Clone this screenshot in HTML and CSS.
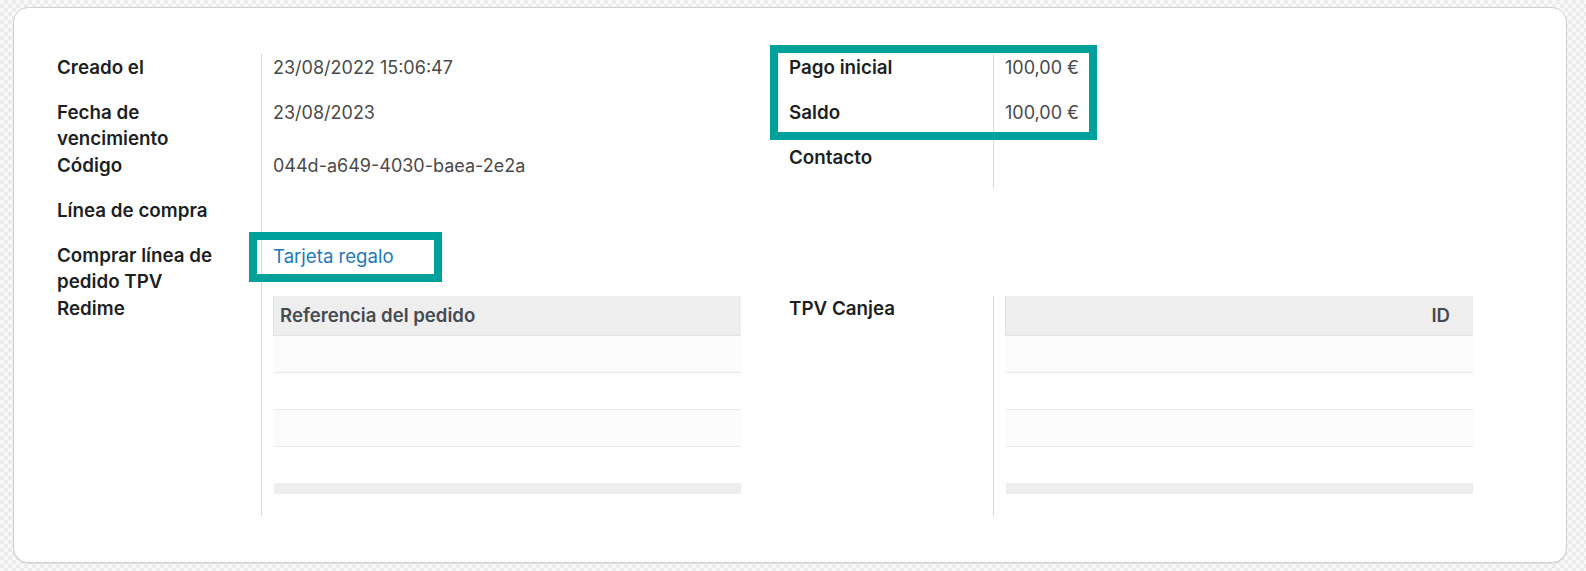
FILE: index.html
```html
<!DOCTYPE html>
<html lang="es">
<head>
<meta charset="utf-8">
<title>Tarjeta regalo</title>
<link rel="stylesheet" href="styles.css">
</head>
<body>
<div class="sheet">
  <div class="group">
    <div class="col">
      <div class="row"><div class="lbl">Creado el</div><div class="val">23/08/2022 15:06:47</div></div>
      <div class="row"><div class="lbl">Fecha de vencimiento</div><div class="val">23/08/2023</div></div>
      <div class="row"><div class="lbl">Código</div><div class="val">044d-a649-4030-baea-2e2a</div></div>
      <div class="row"><div class="lbl">Línea de compra</div><div class="val"></div></div>
      <div class="row"><div class="lbl">Comprar línea de pedido TPV</div><div class="val"><a class="link" href="#">Tarjeta regalo</a></div></div>
    </div>
    <div class="col">
      <div class="row"><div class="lbl">Pago inicial</div><div class="val">100,00 €</div></div>
      <div class="row"><div class="lbl">Saldo</div><div class="val">100,00 €</div></div>
      <div class="row"><div class="lbl">Contacto</div><div class="val"></div></div>
    </div>
  </div>
  <div class="group">
    <div class="col">
      <div class="row row-table"><div class="lbl">Redime</div>
        <div class="val val-table">
          <table class="list">
            <thead><tr><th>Referencia del pedido</th></tr></thead>
            <tbody><tr><td></td></tr><tr><td></td></tr><tr><td></td></tr><tr><td></td></tr></tbody>
            <tfoot><tr><td></td></tr></tfoot>
          </table>
        </div>
      </div>
    </div>
    <div class="col">
      <div class="row row-table"><div class="lbl">TPV Canjea</div>
        <div class="val val-table">
          <table class="list">
            <thead><tr><th class="num">ID</th></tr></thead>
            <tbody><tr><td></td></tr><tr><td></td></tr><tr><td></td></tr><tr><td></td></tr></tbody>
            <tfoot><tr><td></td></tr></tfoot>
          </table>
        </div>
      </div>
    </div>
  </div>
  <div class="mark mark-amounts"></div>
  <div class="mark mark-link"></div>
</div>
</body>
</html>
```
FILE: styles.css
```css
html, body { height: 100%; }
body {
  margin: 0;
  box-sizing: border-box;
  padding: 7px 19px 8px 13px;
  background-color: #f6f6f6;
  background-image: repeating-conic-gradient(#ececec 0 25%, #f9f9f9 0 50%);
  background-size: 8px 8px;
  font-family: "Inter", "Noto Sans", sans-serif;
  color: #212529;
}
.sheet {
  position: relative;
  box-sizing: border-box;
  height: 556px;
  background: #fff;
  border: 1px solid #cfd0d6;
  border-radius: 15px;
  box-shadow: 0 1px 1px rgba(0,0,0,0.08);
  padding: 46px 0 0 43px;
}
.group {
  display: grid;
  grid-template-columns: 684px 684px;
  column-gap: 48px;
  align-items: start;
}
.row {
  display: grid;
  grid-template-columns: 204px 1fr;
  min-height: 44.8px;
}
.lbl {
  padding: 1px 16px 0 0;
  font-weight: 600;
  font-size: 18.8px;
  line-height: 26.3px;
  color: #1d1f23;
}
.val {
  border-left: 1px solid #d9d9d9;
  padding: 1px 0 0 11px;
  font-size: 18px;
  line-height: 26.3px;
  color: #4a4a4a;
}
.link {
  color: #1f78b8;
  text-decoration: none;
  font-size: 18.6px;
}
.row-table .lbl { padding-top: 0; }
.val-table { padding: 0 0 22px 11px; }
.list {
  width: 468px;
  border-collapse: collapse;
}
.list th {
  height: 40px;
  box-sizing: border-box;
  padding: 0 6px;
  background: #eeeeee;
  border-left: 1px solid #e2e2e2;
  border-bottom: 1px solid #e0e4e8;
  text-align: left;
  font-weight: 600;
  font-size: 18.6px;
  color: #454b52;
}
.list th.num { text-align: right; padding-right: 23px; }
.list tbody td {
  height: 36px;
  padding: 0;
  border-bottom: 1px solid #e9e9e9;
}
.list tbody tr:nth-child(odd) td { background: #fbfbfb; }
.list tbody tr:last-child td { border-bottom: 0; }
.list tfoot td {
  height: 11px;
  padding: 0;
  background: #eeeeee;
}
.mark {
  position: absolute;
  box-sizing: border-box;
  border: 8px solid #00a09b;
}
.mark-amounts { left: 756px; top: 37px; width: 327px; height: 95px; }
.mark-link { left: 235px; top: 224px; width: 193px; height: 50px; }
```
